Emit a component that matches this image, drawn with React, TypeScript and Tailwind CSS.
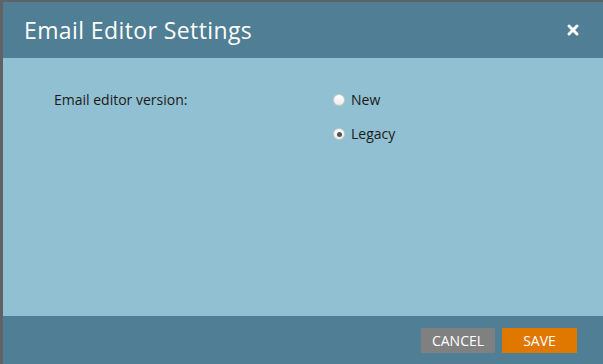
import { X } from "lucide-react";

export default function App() {
  return (
    <div className="h-[364px] w-full bg-[#5f6266] pl-[3px] pt-[2px] font-['Open_Sans',sans-serif]">
      <div className="flex h-full flex-col">
        {/* header */}
        <div className="flex h-[56px] items-center justify-between bg-[#4f7e95] pl-[21px] pr-[22px]">
          <h1 className="text-[23px] leading-none tracking-[0.4px] text-white">Email Editor Settings</h1>
          <X size={16} strokeWidth={4.5} className="text-white" />
        </div>

        {/* body */}
        <div className="flex flex-1 bg-[#90c0d2] pl-[51px] pt-[33px]">
          <div className="w-[279px] text-[14px] leading-[18px] text-[#1b1b1b]">Email editor version:</div>
          <div className="flex flex-col gap-[16px] text-[14px] leading-[18px] text-[#1b1b1b]">
            <label className="flex items-center gap-[6px]">
              <span className="h-[12px] w-[12px] rounded-full border border-[#c9c9c9] bg-gradient-to-b from-white to-[#ececec]" />
              New
            </label>
            <label className="flex items-center gap-[6px]">
              <span className="flex h-[12px] w-[12px] items-center justify-center rounded-full border border-[#c9c9c9] bg-gradient-to-b from-white to-[#ececec]">
                <span className="h-[5px] w-[5px] rounded-full bg-[#555]" />
              </span>
              Legacy
            </label>
          </div>
        </div>

        {/* footer */}
        <div className="flex h-[48px] items-start justify-end gap-[7px] bg-[#4f7e95] pr-[26px] pt-[12px]">
          <button className="h-[25px] w-[74px] bg-[#808080] text-[14px] text-white">CANCEL</button>
          <button className="h-[25px] w-[75px] bg-[#e07800] text-[14px] text-white">SAVE</button>
        </div>
      </div>
    </div>
  );
}
